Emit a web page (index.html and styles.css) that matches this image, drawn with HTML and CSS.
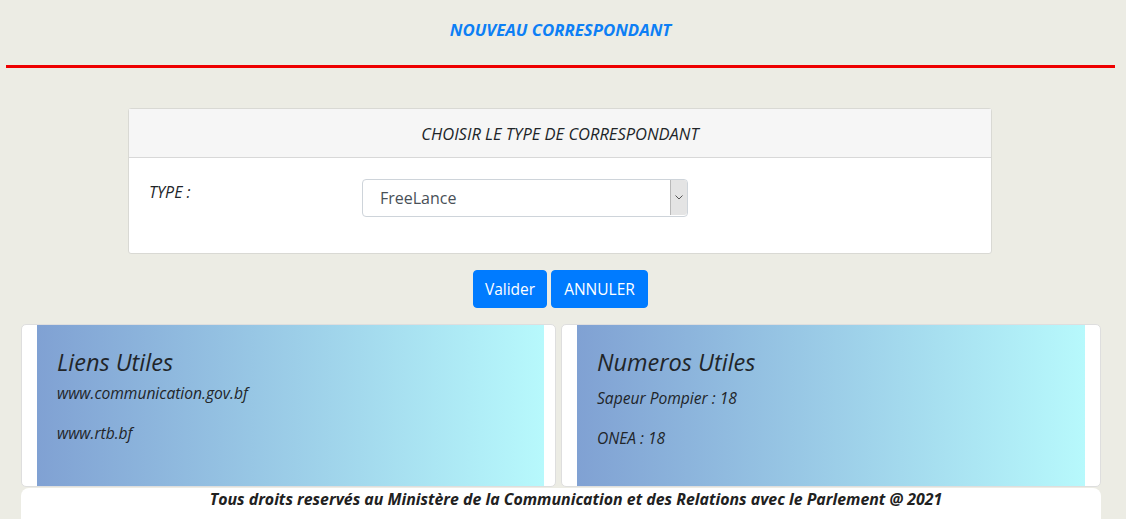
FILE: index.html
```html
<!DOCTYPE html>
<html lang="fr">
<head>
<meta charset="utf-8">
<title>Nouveau correspondant</title>
<link rel="stylesheet" href="styles.css">
</head>
<body>
<div class="page">
  <header class="top">
    <h1 class="title">NOUVEAU CORRESPONDANT</h1>
  </header>
  <div class="rule"></div>

  <section class="card">
    <div class="card-header">CHOISIR LE TYPE DE CORRESPONDANT</div>
    <div class="card-body">
      <label class="type-label" for="type">TYPE :</label>
      <div class="select-wrap">
        <select id="type" class="select">
          <option>FreeLance</option>
        </select>
        <span class="select-arrow">
          <svg width="8" height="5" viewBox="0 0 8 5"><path d="M0.5 0.5 L4 4 L7.5 0.5" fill="none" stroke="#555" stroke-width="1"/></svg>
        </span>
      </div>
    </div>
  </section>

  <div class="actions">
    <button class="btn btn-ok">Valider</button>
    <button class="btn btn-cancel">ANNULER</button>
  </div>

  <div class="panels">
    <div class="panel panel-left">
      <div class="grad">
        <h3 class="panel-title">Liens Utiles</h3>
        <p class="link">www.communication.gov.bf</p>
        <p class="link">www.rtb.bf</p>
      </div>
    </div>
    <div class="panel panel-right">
      <div class="grad">
        <h3 class="panel-title">Numeros Utiles</h3>
        <p class="num num-first">Sapeur Pompier : 18</p>
        <p class="num">ONEA : 18</p>
      </div>
    </div>
  </div>

  <footer class="footer">Tous droits reservés au Ministère de la Communication et des Relations avec le Parlement @ 2021</footer>
</div>
</body>
</html>
```

FILE: styles.css
```css
* { box-sizing: border-box; }
html, body { margin: 0; padding: 0; }
body {
  background: #ecece4;
  font-family: "Open Sans", "Noto Sans", sans-serif;
  color: #212529;
  font-size: 16px;
  line-height: 1.5;
}
.page {
  width: 1121px;
  height: 519px;
  overflow: hidden;
}
.top {
  height: 65px;
  display: flex;
  justify-content: center;
  padding-top: 19px;
}
.title {
  margin: 0;
  font-size: 16.8px;
  font-weight: 700;
  font-style: italic;
  color: #0d7ff5;
  line-height: 22px;
}
.rule {
  margin: 0 6px;
  height: 3px;
  background: #ee0000;
}
.card {
  width: 864px;
  margin: 40px 0 0 128px;
  background: #fff;
  border: 1px solid #d9d9d4;
  border-radius: 3px;
}
.card-header {
  height: 49px;
  padding-top: 2px;
  background: #f6f6f6;
  border-bottom: 1px solid #d8d8d8;
  display: flex;
  align-items: center;
  justify-content: center;
  font-style: italic;
  font-size: 16.5px;
  color: #212529;
}
.card-body {
  display: grid;
  grid-template-columns: 213px 326px;
  padding: 21px 20px 36px;
}
.type-label {
  font-style: italic;
  font-size: 16px;
  padding-top: 1px;
}
.select-wrap {
  position: relative;
  height: 38px;
}
.select {
  width: 100%;
  height: 38px;
  appearance: none;
  -webkit-appearance: none;
  border: 1px solid #ced4da;
  border-radius: 4px;
  background: #fff;
  font-family: inherit;
  font-size: 16px;
  color: #495057;
  padding: 0 12px 0 17px;
}
.select-arrow {
  position: absolute;
  right: 1px;
  top: 1px;
  width: 17px;
  height: 35px;
  background: #e4e4e4;
  border-left: 1px solid #b9b9b9;
  border-radius: 0 3px 3px 0;
  display: flex;
  align-items: center;
  justify-content: center;
}
.actions {
  display: flex;
  justify-content: center;
  gap: 4px;
  margin-top: 16px;
}
.btn {
  height: 38px;
  padding: 0;
  background: #007bff;
  color: #fff;
  border: 1px solid #007bff;
  border-radius: 4px;
  font-family: inherit;
  font-size: 15.5px;
}
.btn-ok { width: 74px; }
.btn-cancel { width: 97px; }
.panels {
  display: grid;
  grid-template-columns: 535px 540px;
  gap: 5px;
  margin: 16px 0 0 21px;
  width: 1080px;
}
.panel {
  height: 163px;
  background: #fff;
  border: 1px solid #dedede;
  border-radius: 5px;
  padding: 0 11px 0 15px;
}
.panel-right { padding: 0 15px 0 15px; }
.grad {
  height: 161px;
  background: linear-gradient(to right, #80a1d3, #b7f9fc);
  padding: 20px 20px 0;
}
.panel-title {
  margin: 0;
  font-size: 23.5px;
  font-weight: 400;
  font-style: italic;
  line-height: 34px;
}
.link, .num {
  margin: 0;
  font-style: italic;
  font-size: 15.6px;
  line-height: 24px;
}
.link:first-of-type { margin-top: 2px; }
.link + .link { margin-top: 16px; }
.num-first { margin-top: 7px; }
.num + .num { margin-top: 16px; }
.footer {
  margin: 1px 0 0 21px;
  width: 1080px;
  height: 40px;
  padding-left: 30px;
  background: #fff;
  border-radius: 8px;
  text-align: center;
  font-weight: 700;
  font-style: italic;
  font-size: 15.9px;
  line-height: 22px;
  color: #212121;
}
```
